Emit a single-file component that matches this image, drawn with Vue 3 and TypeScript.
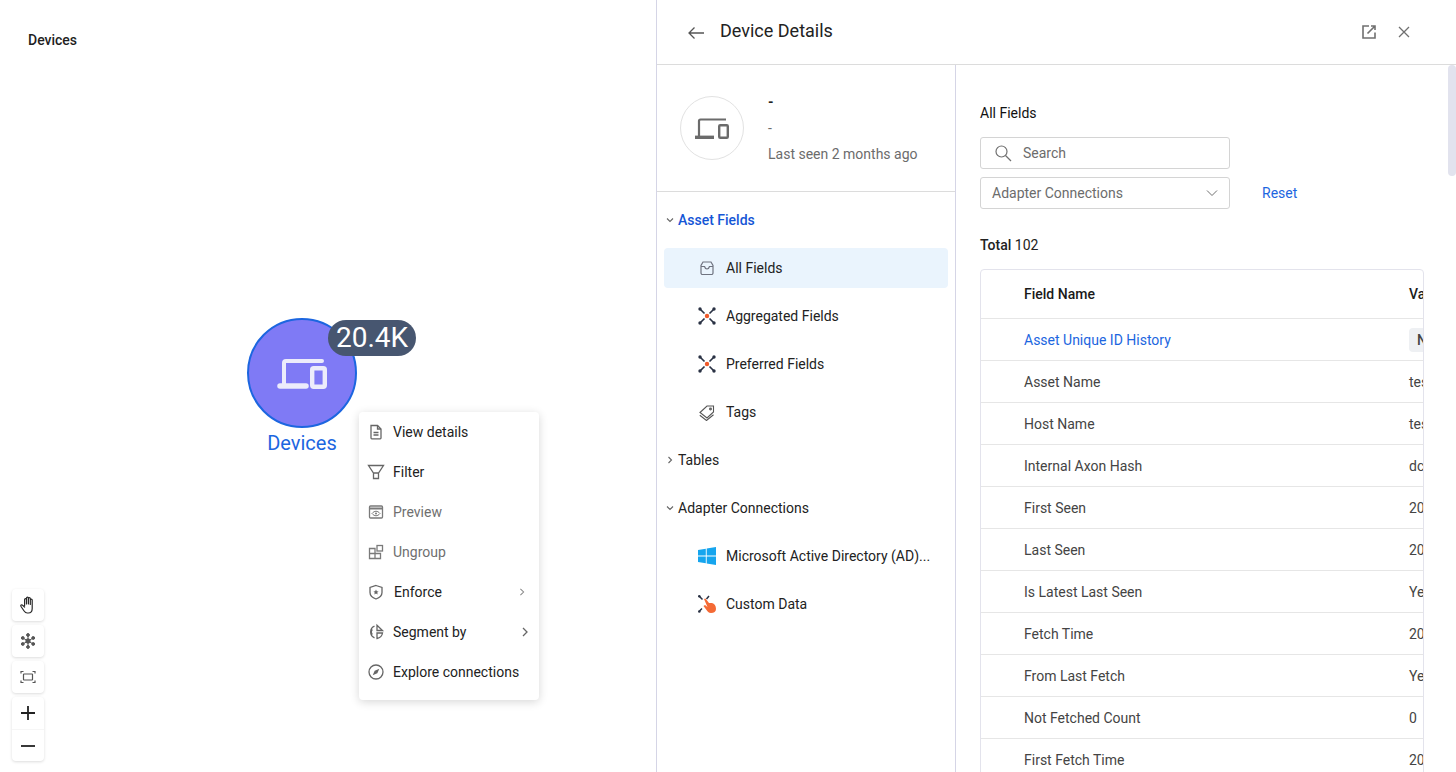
<script setup lang="ts">
const menu = [
  { label: 'View details', icon: 'doc', muted: false, arrow: '' },
  { label: 'Filter', icon: 'filter', muted: false, arrow: '' },
  { label: 'Preview', icon: 'preview', muted: true, arrow: '' },
  { label: 'Ungroup', icon: 'ungroup', muted: true, arrow: '' },
  { label: 'Enforce', icon: 'shield', muted: false, arrow: 'small' },
  { label: 'Segment by', icon: 'pie', muted: false, arrow: 'big' },
  { label: 'Explore connections', icon: 'compass', muted: false, arrow: '' },
]
const rows = [
  { name: 'Asset Unique ID History', value: 'N', link: true },
  { name: 'Asset Name', value: 'test' },
  { name: 'Host Name', value: 'test' },
  { name: 'Internal Axon Hash', value: 'dc' },
  { name: 'First Seen', value: '20' },
  { name: 'Last Seen', value: '20' },
  { name: 'Is Latest Last Seen', value: 'Yes' },
  { name: 'Fetch Time', value: '20' },
  { name: 'From Last Fetch', value: 'Yes' },
  { name: 'Not Fetched Count', value: '0' },
  { name: 'First Fetch Time', value: '20' },
]
</script>

<template>
  <div class="page">
    <section class="canvas">
      <div class="canvas-title">Devices</div>

      <div class="node">
        <svg width="50" height="31" viewBox="0 0 50 31" fill="none">
          <path d="M7 26V5c0-1.400.6-2 2-2h36" stroke="#ececfb" stroke-width="4" stroke-linecap="round" />
          <path d="M3 28h26" stroke="#ececfb" stroke-width="5.500" stroke-linecap="round" />
          <rect x="35.200" y="10.200" width="12.600" height="18.600" rx="1.500" stroke="#ececfb" stroke-width="4.400" />
        </svg>
      </div>
      <div class="badge">20.4K</div>
      <div class="node-label">Devices</div>

      <div class="menu">
        <div v-for="m in menu" :key="m.label" class="menu-item" :class="{ muted: m.muted }">
          <span class="menu-icon">
            <svg width="18" height="18" viewBox="0 0 18 18" fill="none" stroke="currentColor" stroke-width="1.300">
              <template v-if="m.icon === 'doc'">
                <path d="M4 2.500h6.500L14 6v9a.8.8 0 0 1-.8.8H4.800A.8.8 0 0 1 4 15z" />
                <path d="M10.500 2.500V6H14M6.500 9.500h5M6.500 12h5" />
              </template>
              <template v-else-if="m.icon === 'filter'">
                <path d="M1.500 2.500h15L11.500 10H6.500zM6.500 10v5.500h5V10" />
              </template>
              <template v-else-if="m.icon === 'preview'">
                <rect x="2.500" y="3" width="13" height="12" rx="1" />
                <path d="M2.500 5.500h13" stroke-width="2" />
                <path d="M5 10.500c2.400-3 5.600-3 8 0-2.400 3-5.600 3-8 0z" stroke-width="1" />
                <circle cx="9" cy="10.500" r="1" fill="currentColor" stroke="none" />
              </template>
              <template v-else-if="m.icon === 'ungroup'">
                <path d="M2.500 5.500h5.500v5H2.500zM2.500 10.500h5.500v5H2.500zM8 10.500h5.500v5H8z" />
                <rect x="10" y="2.500" width="5.500" height="5.500" />
              </template>
              <template v-else-if="m.icon === 'shield'">
                <path d="M9 2.500l6 2v5c0 3.200-2.600 5.300-6 6.500-3.400-1.200-6-3.300-6-6.500v-5z" />
                <path d="M9 6.500l.8 1.700 1.800.2-1.300 1.200.3 1.800L9 10.500l-1.600.9.3-1.800-1.300-1.200 1.800-.2z" fill="currentColor" stroke="none" />
              </template>
              <template v-else-if="m.icon === 'pie'">
                <path d="M7.500 3.200a6.300 6.300 0 0 0 0 11.600M5.400 6.500a3.400 3.400 0 0 0 0 5" />
                <path d="M10 2.300l5.500 5.200H10zM10 10h5.500c-.4 2.700-2.700 5-5.500 5.500z" />
              </template>
              <template v-else>
                <circle cx="9" cy="9" r="7" />
                <path d="M12.300 5.700L10.300 10.300 5.700 12.300 7.700 7.700z" fill="currentColor" stroke="none" />
              </template>
            </svg>
          </span>
          <span class="menu-label" :class="'label-' + m.icon">{{ m.label }}</span>
          <svg v-if="m.arrow" class="menu-arrow" :class="m.arrow" width="8" height="10" viewBox="0 0 8 10" fill="none" stroke="currentColor" stroke-width="1.300">
            <path d="M2 1l4 4-4 4" />
          </svg>
        </div>
      </div>

      <div class="tools">
        <button class="tool">
          <svg width="18" height="18" viewBox="0 0 18 18" fill="none" stroke="#2a2a2a" stroke-width="1.200" stroke-linecap="round" stroke-linejoin="round">
            <path d="M5.600 9.500V3.600a.95.95 0 0 1 1.900 0V8M7.500 8V2a.95.95 0 0 1 1.900 0V8M9.400 8V2.600a.95.95 0 0 1 1.900 0V8.500M11.300 8.500V4a.95.95 0 0 1 1.900 0v8.500c0 2.700-1.500 4.500-3.900 4.500H8.300c-1.500 0-2.300-.7-3.200-2L2 10.500c-.8-1.100.6-2.300 1.600-1.300L5.600 11" />
          </svg>
        </button>
        <button class="tool">
          <svg width="18" height="18" viewBox="0 0 18 18" fill="#555" stroke="#555" stroke-width="1">
            <path d="M9 3v12M3.800 6l10.400 6M14.200 6L3.800 12" />
            <circle cx="9" cy="9" r="2.200" />
            <circle cx="9" cy="3" r="1.400" /><circle cx="9" cy="15" r="1.400" />
            <circle cx="3.800" cy="6" r="1.400" /><circle cx="14.200" cy="6" r="1.400" />
            <circle cx="3.800" cy="12" r="1.400" /><circle cx="14.200" cy="12" r="1.400" />
          </svg>
        </button>
        <button class="tool">
          <svg width="18" height="18" viewBox="0 0 18 18" fill="none" stroke="#555" stroke-width="1.200">
            <path d="M2 5.500V3.500h2.500M13.500 3.500H16v2M2 12.500v2h2.500M13.500 14.500H16v-2" />
            <rect x="4.500" y="6" width="9" height="6" rx=".5" />
          </svg>
        </button>
        <div class="tool-group">
          <button class="tool plain">
            <svg width="18" height="18" viewBox="0 0 18 18" stroke="#222" stroke-width="1.800"><path d="M9 2v14M2 9h14" /></svg>
          </button>
          <button class="tool plain">
            <svg width="18" height="18" viewBox="0 0 18 18" stroke="#222" stroke-width="1.800"><path d="M2 9h14" /></svg>
          </button>
        </div>
      </div>
    </section>

    <section class="panel">
      <header class="panel-head">
        <svg class="back" width="18" height="14" viewBox="0 0 18 14" fill="none" stroke="#555" stroke-width="1.300">
          <path d="M17 7H2M7.500 1.500L2 7l5.500 5.500" />
        </svg>
        <h1 class="panel-title">Device Details</h1>
        <svg class="open" width="14" height="14" viewBox="0 0 14 14" fill="none" stroke="#707070" stroke-width="1.600">
          <path d="M7 1H1v12h12V7.500" />
          <path d="M5.500 8.500L12.500 1.500M9 1h4v4" />
        </svg>
        <svg class="close" width="12" height="12" viewBox="0 0 12 12" fill="none" stroke="#707070" stroke-width="1.300">
          <path d="M1 1l10 10M11 1L1 11" />
        </svg>
      </header>

      <div class="panel-body">
        <aside class="side">
          <div class="profile">
            <div class="avatar">
              <svg width="34" height="21" viewBox="0 0 34 21" fill="none" stroke="#6b6b6b">
                <path d="M4 18V3c0-1 .5-1.500 1.500-1.500H31" stroke-width="2.200" />
                <path d="M0 19.300h19" stroke-width="3.400" />
                <rect x="24.200" y="7.200" width="8.600" height="12.600" rx="1" stroke-width="2.400" />
              </svg>
            </div>
            <div class="profile-text">
              <div class="dash-strong">-</div>
              <div class="dash">-</div>
              <div class="seen">Last seen 2 months ago</div>
            </div>
          </div>

          <nav class="nav">
            <div class="nav-head active">
              <svg class="chev" width="8" height="8" viewBox="0 0 8 8" fill="none" stroke="#666" stroke-width="1.100"><path d="M1 2.500l3 3 3-3" /></svg>
              Asset Fields
            </div>
            <div class="nav-item selected">
              <svg width="18" height="18" viewBox="0 0 18 18" fill="none" stroke="#6f7380" stroke-width="1.200">
                <path d="M3 6.500V14a1.500 1.500 0 0 0 1.500 1.500h9A1.500 1.500 0 0 0 15 14V6.500L13 3H5z" />
                <path d="M3 7.500h3.500c.5 1.800 1.300 2.500 2.500 2.500s2-.7 2.500-2.500H15" />
              </svg>
              All Fields
            </div>
            <div class="nav-item" v-for="n in ['Aggregated Fields', 'Preferred Fields']" :key="n">
              <svg width="18" height="18" viewBox="0 0 18 18" fill="none">
                <path d="M2.500 2.500L6.500 6.500M15.500 2.500L11.500 6.500M2.500 15.500L6.500 11.500M15.500 15.500L11.500 11.500" stroke="#2a3244" stroke-width="1.700" />
                <circle cx="2" cy="2" r="1.700" fill="#2a3244" /><circle cx="16" cy="2" r="1.700" fill="#2a3244" />
                <circle cx="2" cy="16" r="1.700" fill="#2a3244" /><circle cx="16" cy="16" r="1.700" fill="#2a3244" />
                <circle cx="9" cy="9" r="2.200" fill="#ef5a2a" />
              </svg>
              {{ n }}
            </div>
            <div class="nav-item">
              <svg width="18" height="18" viewBox="0 0 18 18" fill="none" stroke="#555" stroke-width="1.100">
                <path d="M2 9.500L9 3h6.500v6L9 15z" />
                <path d="M1.800 12.300L8.500 17.500 15.500 11.800" />
                <circle cx="12.500" cy="6" r=".9" />
              </svg>
              Tags
            </div>
            <div class="nav-head">
              <svg class="chev" width="8" height="8" viewBox="0 0 8 8" fill="none" stroke="#666" stroke-width="1.100"><path d="M2.500 1l3 3-3 3" /></svg>
              Tables
            </div>
            <div class="nav-head">
              <svg class="chev" width="8" height="8" viewBox="0 0 8 8" fill="none" stroke="#666" stroke-width="1.100"><path d="M1 2.500l3 3 3-3" /></svg>
              Adapter Connections
            </div>
            <div class="nav-item">
              <svg width="18" height="18" viewBox="0 0 18 18" fill="#16a5ee">
                <path d="M0 3l7.800-1.200v6.700H0zM8.700 1.600L18 0v8.500H8.700zM0 9.500h7.800v6.700L0 15zM8.700 9.500H18V18l-9.300-1.600z" />
              </svg>
              <span class="ellipsis">Microsoft Active Directory (AD)...</span>
            </div>
            <div class="nav-item">
              <svg width="18" height="18" viewBox="0 0 18 18" fill="none">
                <path d="M1.500 1.500L4.500 4.500M11 1L8.500 4M1.500 16L4 13.500" stroke="#2a3244" stroke-width="1.500" />
                <circle cx="1.300" cy="1.300" r="1.300" fill="#2a3244" /><circle cx="1.300" cy="16.500" r="1.300" fill="#2a3244" />
                <path d="M6 4L7.500 3.500 11 8 14 8C16.500 9 18 10.500 18 14 18 16.500 16 18 13 18 10.500 18 9.500 16.500 8.500 15L5.500 11 7 10 9.500 12z" fill="#f46a35" />
              </svg>
              Custom Data
            </div>
          </nav>
        </aside>

        <main class="content">
          <h2 class="content-title">All Fields</h2>
          <div class="field search">
            <svg width="18" height="18" viewBox="0 0 18 18" fill="none" stroke="#707070" stroke-width="1.200">
              <circle cx="7.500" cy="7.500" r="5.500" /><path d="M11.500 11.500L17 17" />
            </svg>
            <span>Search</span>
          </div>
          <div class="filter-row">
            <div class="field select">
              <span>Adapter Connections</span>
              <svg width="12" height="8" viewBox="0 0 12 8" fill="none" stroke="#707070" stroke-width="1"><path d="M1 1.500l5 5 5-5" /></svg>
            </div>
            <a class="reset">Reset</a>
          </div>
          <div class="total"><b>Total</b> 102</div>
          <div class="table">
            <div class="tr th">
              <div class="td-name">Field Name</div>
              <div class="td-value">Value</div>
            </div>
            <div class="tr" v-for="r in rows" :key="r.name">
              <div class="td-name" :class="{ link: r.link }">{{ r.name }}</div>
              <div class="td-value">
                <span v-if="r.link" class="chip">N</span>
                <template v-else>{{ r.value }}</template>
              </div>
            </div>
          </div>
          <div class="thumb"></div>
        </main>
      </div>
    </section>
  </div>
</template>

<style scoped>
.page {
  display: flex;
  width: 1456px;
  height: 772px;
  overflow: hidden;
  background: #fff;
  font-family: Roboto, "Liberation Sans", sans-serif;
  font-size: 14px;
  color: #1f1f1f;
}
.canvas {
  position: relative;
  width: 656px;
  flex: none;
}
.canvas-title {
  position: absolute;
  left: 28px;
  top: 32px;
  font-size: 14px;
  line-height: 16px;
  font-weight: 500;
}
.node {
  position: absolute;
  left: 247px;
  top: 318px;
  width: 110px;
  height: 110px;
  box-sizing: border-box;
  border: 2px solid #1c66e0;
  border-radius: 50%;
  background: #7f7af5;
  display: flex;
  align-items: center;
  justify-content: center;
}
.badge {
  position: absolute;
  left: 328px;
  top: 320px;
  width: 88px;
  height: 36px;
  border-radius: 18px;
  background: #475670;
  color: #fff;
  font-size: 28px;
  line-height: 36px;
  text-align: center;
}
.node-label {
  position: absolute;
  left: 232px;
  top: 432px;
  width: 140px;
  text-align: center;
  font-size: 20px;
  line-height: 23px;
  color: #1c66e0;
}
.menu {
  position: absolute;
  left: 359px;
  top: 412px;
  width: 180px;
  padding-bottom: 8px;
  border-radius: 4px;
  background: #fff;
  box-shadow: 0 2px 10px rgba(0, 0, 0, 0.16);
}
.menu-item {
  display: flex;
  align-items: center;
  height: 40px;
  padding-left: 8px;
  color: #222;
}
.menu-item.muted {
  color: #6f6f6f;
}
.menu-icon {
  width: 18px;
  height: 18px;
  margin-right: 8px;
  color: #666;
  display: flex;
}
.menu-item.muted .menu-icon {
  color: #7a7a7a;
}
.label-shield {
  margin-left: 1px;
}
.menu-arrow {
  margin-left: auto;
  color: #666;
}
.menu-arrow.small {
  margin-right: 13px;
  transform: scale(0.8);
  color: #888;
}
.menu-arrow.big {
  margin-right: 10px;
}
.tools {
  position: absolute;
  left: 12px;
  top: 589px;
  display: flex;
  flex-direction: column;
  gap: 4px;
}
.tool {
  width: 32px;
  height: 32px;
  padding: 0;
  border: 0;
  border-radius: 4px;
  background: #fff;
  box-shadow: 0 1px 3px rgba(0, 0, 0, 0.14);
  display: flex;
  align-items: center;
  justify-content: center;
}
.tool-group {
  border-radius: 4px;
  box-shadow: 0 1px 3px rgba(0, 0, 0, 0.14);
  background: #fff;
}
.tool.plain {
  box-shadow: none;
  background: transparent;
}
.tool.plain + .tool.plain {
  border-top: 1px solid #f6f6f6;
  border-radius: 0 0 4px 4px;
}

.panel {
  flex: 1;
  min-width: 0;
  display: flex;
  flex-direction: column;
  border-left: 1px solid #d5d5e6;
}
.panel-head {
  height: 65px;
  box-sizing: border-box;
  flex: none;
  display: flex;
  align-items: center;
  padding: 0 46px 0 30px;
  border-bottom: 1px solid #dcdcdc;
}
.back {
  margin-right: 15px;
  margin-top: 2px;
}
.panel-title {
  margin: -4px 0 0;
  font-size: 18px;
  font-weight: 400;
  color: #222;
}
.open {
  margin-left: auto;
  margin-right: 22px;
  margin-top: -1px;
}
.close {
  margin-top: -1px;
}
.panel-body {
  flex: 1;
  min-height: 0;
  display: flex;
}
.side {
  width: 299px;
  box-sizing: border-box;
  flex: none;
  border-right: 1px solid #d5d5e6;
}
.profile {
  height: 127px;
  box-sizing: border-box;
  border-bottom: 1px solid #dcdcdc;
  display: flex;
  padding: 31px 0 0 23px;
}
.avatar {
  width: 64px;
  height: 64px;
  box-sizing: border-box;
  border: 1px solid #e2e2e2;
  border-radius: 50%;
  display: flex;
  align-items: center;
  justify-content: center;
}
.profile-text {
  margin-left: 24px;
  margin-top: -4px;
  color: #6c6c6c;
}
.dash-strong {
  height: 26px;
  line-height: 20px;
  font-weight: 700;
  color: #222;
}
.dash {
  height: 26px;
  line-height: 20px;
}
.seen {
  line-height: 20px;
}
.nav {
  padding-top: 4px;
  display: flex;
  flex-direction: column;
}
.nav-head {
  height: 48px;
  flex: none;
  display: flex;
  align-items: center;
  padding-left: 9px;
  color: #222;
}
.nav-head .chev {
  margin-right: 4px;
}
.nav-head.active {
  color: #1556d6;
  font-weight: 500;
}
.nav-item {
  height: 40px;
  flex: none;
  margin: 4px 7px 4px 7px;
  padding-left: 34px;
  display: flex;
  align-items: center;
  gap: 10px;
  border-radius: 4px;
  color: #222;
}
.nav-item.selected {
  background: #eaf4fd;
}
.ellipsis {
  white-space: nowrap;
}
.content {
  position: relative;
  flex: 1;
  min-width: 0;
  padding: 38px 32px 0 24px;
  overflow: hidden;
}
.content-title {
  margin: 0 0 14px;
  font-size: 14px;
  font-weight: 400;
  line-height: 20px;
  color: #111;
}
.field {
  width: 250px;
  height: 32px;
  box-sizing: border-box;
  border: 1px solid #d4d4d4;
  border-radius: 3px;
  display: flex;
  align-items: center;
  color: #6c6c6c;
}
.search {
  padding-left: 13px;
  gap: 11px;
  margin-bottom: 8px;
}
.select {
  justify-content: space-between;
  padding: 0 11px;
}
.filter-row {
  display: flex;
  align-items: center;
  gap: 32px;
}
.reset {
  color: #1c66e0;
}
.total {
  margin-top: 26px;
  line-height: 20px;
  color: #222;
}
.total b {
  font-weight: 500;
}
.table {
  margin-top: 14px;
  width: 444px;
  box-sizing: border-box;
  border: 1px solid #e3e3ec;
  border-radius: 4px 4px 0 0;
  overflow: hidden;
}
.tr {
  height: 42px;
  box-sizing: border-box;
  border-bottom: 1px solid #e6e6e6;
  display: flex;
  align-items: center;
  white-space: nowrap;
  color: #444;
}
.tr.th {
  height: 49px;
  font-weight: 500;
  color: #1a1a1a;
}
.td-name {
  width: 428px;
  flex: none;
  padding-left: 43px;
  box-sizing: border-box;
}
.td-value {
  flex: none;
}
.link {
  color: #1c66e0;
}
.chip {
  display: inline-block;
  width: 40px;
  height: 24px;
  line-height: 24px;
  padding-left: 8px;
  box-sizing: border-box;
  border-radius: 4px;
  background: #eef0f3;
  font-weight: 500;
}
.thumb {
  position: absolute;
  right: 0;
  top: 0;
  width: 8px;
  height: 111px;
  border-radius: 4px;
  background: #e2e3ee;
}
</style>
